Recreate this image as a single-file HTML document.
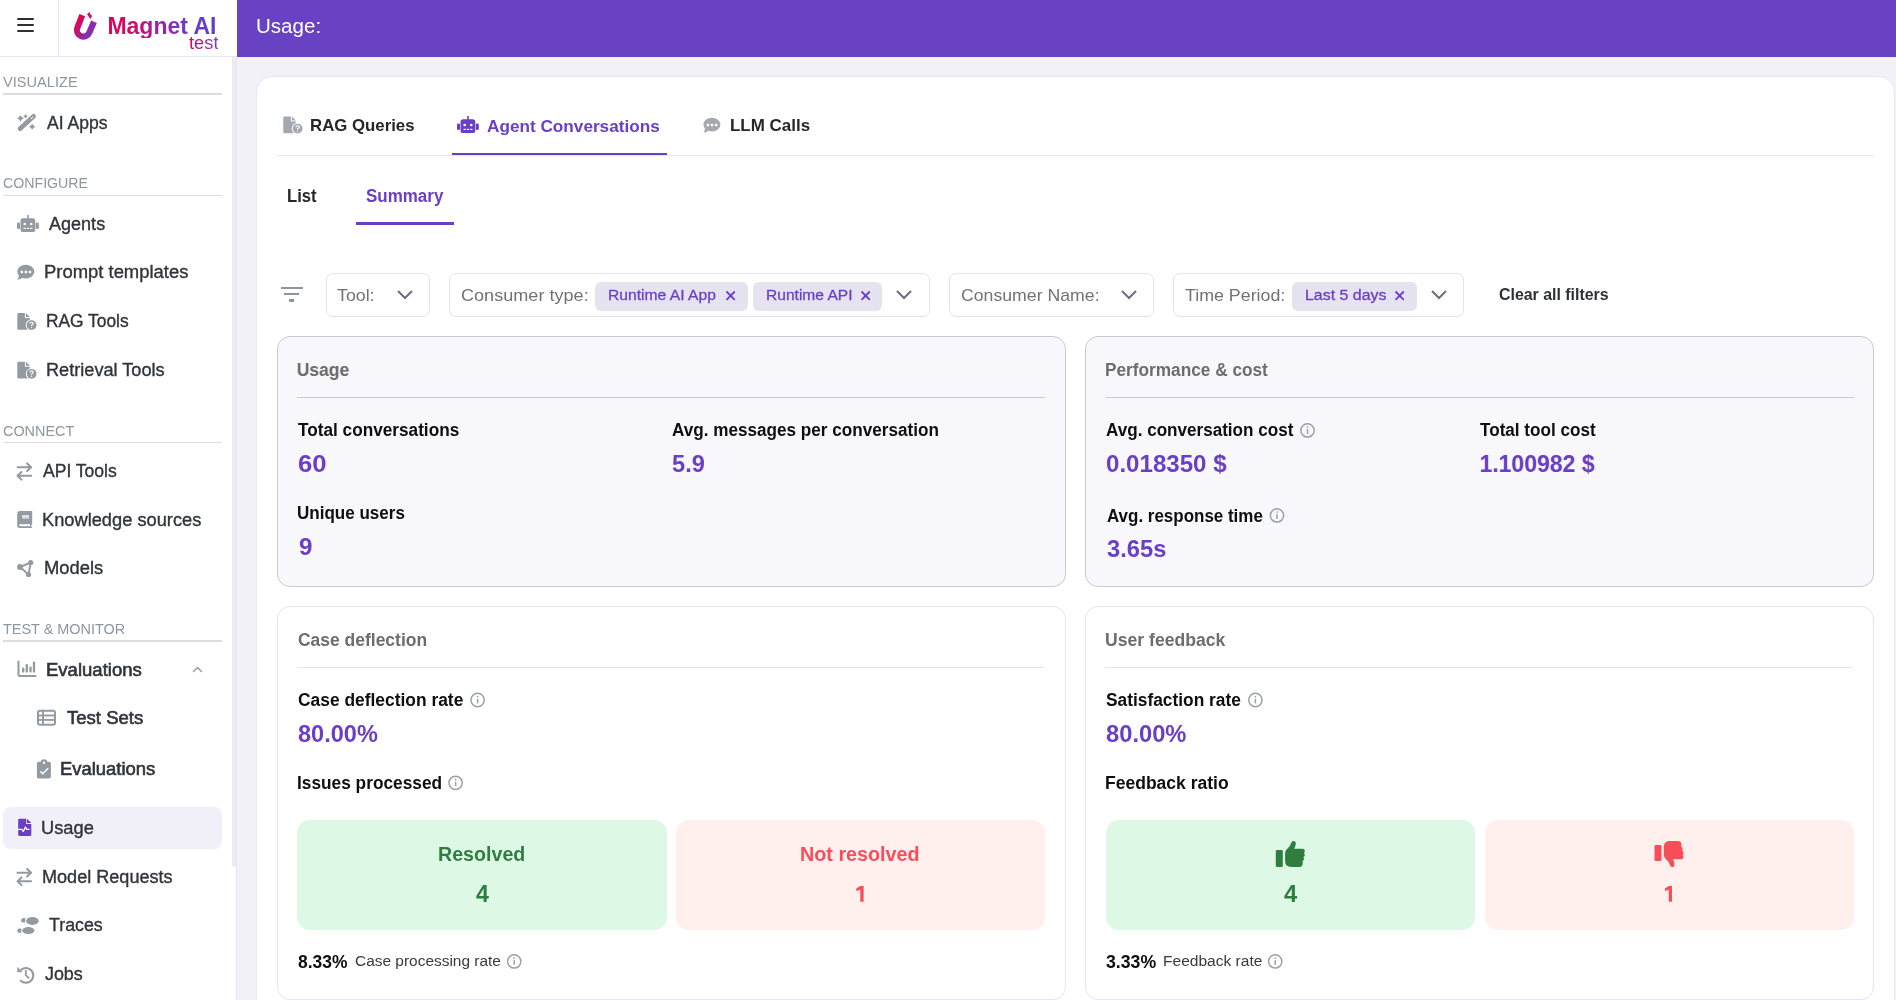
<!DOCTYPE html>
<html><head><meta charset="utf-8">
<style>
*{box-sizing:border-box;margin:0;padding:0}
html,body{width:1896px;height:1000px;overflow:hidden;background:#f3f1f8;font-family:"Liberation Sans",sans-serif}
.t{position:absolute;white-space:nowrap}
.r{position:absolute;display:block}
</style></head><body>
<div class="r" style="left:0px;top:0px;width:237px;height:1000px;background:#fff;"></div>
<div class="r" style="left:237px;top:0px;width:1659px;height:57px;background:#6941c3;"></div>
<div class="r" style="left:0px;top:56px;width:237px;height:1px;background:#e7e4f4;"></div>
<div class="r" style="left:58px;top:0px;width:1px;height:56px;background:#e7e4f4;"></div>
<div class="r" style="left:236px;top:57px;width:1px;height:943px;background:#e8e6f4;"></div>
<div class="r" style="left:232px;top:57px;width:4.2px;height:810px;background:#ececec;border-radius:0 0 2px 2px"></div>
<div class="r" style="left:17px;top:18px;width:17px;height:2px;background:#303030;border-radius:1px"></div>
<div class="r" style="left:17px;top:24px;width:17px;height:2px;background:#303030;border-radius:1px"></div>
<div class="r" style="left:17px;top:30px;width:17px;height:2px;background:#303030;border-radius:1px"></div>
<svg class="r" style="left:68px;top:8px" width="36" height="36" viewBox="68 8 36 36">
<defs><linearGradient id="lg1" gradientUnits="userSpaceOnUse" x1="75" y1="20" x2="95" y2="34"><stop offset="0" stop-color="#ea0045"/><stop offset="0.5" stop-color="#b01c8c"/><stop offset="1" stop-color="#6240d2"/></linearGradient></defs>
<path d="M82.3 15.2 L77.3 27.8 A6.4 6.4 0 0 0 89.4 32.4 L94 21.8" stroke="url(#lg1)" stroke-width="6.2" fill="none"/>
<path d="M87 14.3 L89.6 11.9 L90.6 14.4 L92.2 15.9 L90.2 18.9 L88.6 16.4 Z" fill="#c2137c"/>
</svg>
<div class="t" style="left:107.40px;top:15px;font-size:23px;line-height:23px;font-weight:700;color:transparent;background:linear-gradient(90deg,#e6004b 0%,#c40f7c 30%,#8a2bb5 58%,#6a3cc9 75%,#5f40cc 100%);-webkit-background-clip:text;background-clip:text">Magnet AI</div>
<div class="t" style="left:188.50px;top:34px;font-size:18px;line-height:18px;font-weight:400;color:transparent;transform:scaleX(1.0168);transform-origin:0 0;background:linear-gradient(90deg,#e0004e 0%,#a8209a 50%,#6a45d0 100%);-webkit-background-clip:text;background-clip:text">test</div>
<div class="t" style="left:256.47px;top:16px;font-size:20px;line-height:20px;font-weight:400;color:#fff;transform:scaleX(1.0277);transform-origin:0 0">Usage:</div>
<div class="t" style="left:3.30px;top:74px;font-size:15.5px;line-height:15.5px;font-weight:400;color:#8d979f;transform:scaleX(0.9416);transform-origin:0 0">VISUALIZE</div>
<div class="r" style="left:3px;top:93px;width:219px;height:2px;background:#dcdcdc;"></div>
<div class="t" style="left:3.30px;top:175px;font-size:15.5px;line-height:15.5px;font-weight:400;color:#8d979f;transform:scaleX(0.9141);transform-origin:0 0">CONFIGURE</div>
<div class="r" style="left:3px;top:195px;width:219px;height:1px;background:#dedede;"></div>
<div class="t" style="left:3.30px;top:423px;font-size:15.5px;line-height:15.5px;font-weight:400;color:#8d979f;transform:scaleX(0.9291);transform-origin:0 0">CONNECT</div>
<div class="r" style="left:3px;top:442px;width:219px;height:1px;background:#dedede;"></div>
<div class="t" style="left:3.30px;top:621px;font-size:15.5px;line-height:15.5px;font-weight:400;color:#8d979f;transform:scaleX(0.9316);transform-origin:0 0">TEST &amp; MONITOR</div>
<div class="r" style="left:3px;top:640px;width:219px;height:2px;background:#dcdcdc;"></div>
<div class="t" style="left:47.20px;top:115px;font-size:17.5px;line-height:17.5px;font-weight:400;color:#2f353b;transform:scaleX(1.0011);transform-origin:0 0;-webkit-text-stroke:0.35px #2f353b">AI Apps</div>
<div class="t" style="left:49.20px;top:216px;font-size:17.5px;line-height:17.5px;font-weight:400;color:#2f353b;transform:scaleX(1.0305);transform-origin:0 0;-webkit-text-stroke:0.35px #2f353b">Agents</div>
<div class="t" style="left:43.95px;top:264px;font-size:17.5px;line-height:17.5px;font-weight:400;color:#2f353b;transform:scaleX(1.0529);transform-origin:0 0;-webkit-text-stroke:0.35px #2f353b">Prompt templates</div>
<div class="t" style="left:45.81px;top:313px;font-size:17.5px;line-height:17.5px;font-weight:400;color:#2f353b;transform:scaleX(0.9917);transform-origin:0 0;-webkit-text-stroke:0.35px #2f353b">RAG Tools</div>
<div class="t" style="left:45.76px;top:362px;font-size:17.5px;line-height:17.5px;font-weight:400;color:#2f353b;transform:scaleX(1.0367);transform-origin:0 0;-webkit-text-stroke:0.35px #2f353b">Retrieval Tools</div>
<div class="t" style="left:42.70px;top:463px;font-size:17.5px;line-height:17.5px;font-weight:400;color:#2f353b;transform:scaleX(1.0017);transform-origin:0 0;-webkit-text-stroke:0.35px #2f353b">API Tools</div>
<div class="t" style="left:41.96px;top:512px;font-size:17.5px;line-height:17.5px;font-weight:400;color:#2f353b;transform:scaleX(1.0429);transform-origin:0 0;-webkit-text-stroke:0.35px #2f353b">Knowledge sources</div>
<div class="t" style="left:43.95px;top:560px;font-size:17.5px;line-height:17.5px;font-weight:400;color:#2f353b;transform:scaleX(1.0510);transform-origin:0 0;-webkit-text-stroke:0.35px #2f353b">Models</div>
<div class="t" style="left:45.94px;top:662px;font-size:17.5px;line-height:17.5px;font-weight:400;color:#2f353b;transform:scaleX(1.0588);transform-origin:0 0;-webkit-text-stroke:0.6px #2f353b">Evaluations</div>
<div class="t" style="left:66.50px;top:710px;font-size:17.5px;line-height:17.5px;font-weight:400;color:#2f353b;transform:scaleX(1.0592);transform-origin:0 0;-webkit-text-stroke:0.6px #2f353b">Test Sets</div>
<div class="t" style="left:60.45px;top:761px;font-size:17.5px;line-height:17.5px;font-weight:400;color:#2f353b;transform:scaleX(1.0532);transform-origin:0 0;-webkit-text-stroke:0.6px #2f353b">Evaluations</div>
<div class="r" style="left:3px;top:807px;width:219px;height:42px;background:#f1eff8;border-radius:8px"></div>
<div class="t" style="left:41.46px;top:820px;font-size:17.5px;line-height:17.5px;font-weight:400;color:#2f353b;transform:scaleX(1.0439);transform-origin:0 0;-webkit-text-stroke:0.35px #2f353b">Usage</div>
<div class="t" style="left:41.67px;top:869px;font-size:17.5px;line-height:17.5px;font-weight:400;color:#2f353b;transform:scaleX(1.0326);transform-origin:0 0;-webkit-text-stroke:0.35px #2f353b">Model Requests</div>
<div class="t" style="left:49.00px;top:917px;font-size:17.5px;line-height:17.5px;font-weight:400;color:#2f353b;transform:scaleX(1.0173);transform-origin:0 0;-webkit-text-stroke:0.35px #2f353b">Traces</div>
<div class="t" style="left:45.00px;top:966px;font-size:17.5px;line-height:17.5px;font-weight:400;color:#2f353b;transform:scaleX(1.0211);transform-origin:0 0;-webkit-text-stroke:0.35px #2f353b">Jobs</div>
<svg class="r" style="left:14px;top:110px" width="26" height="24" viewBox="14 110 26 24"><line x1="20" y1="128.8" x2="33.6" y2="116.2" stroke="#939aa1" stroke-width="4.6" stroke-linecap="round"/><line x1="30.6" y1="119" x2="33.2" y2="116.6" stroke="#fff" stroke-width="1.1" opacity="0.7"/><path d="M20.5 114.89999999999999 Q21.452 117.348 23.9 118.3 Q21.452 119.252 20.5 121.7 Q19.548 119.252 17.1 118.3 Q19.548 117.348 20.5 114.89999999999999 Z" fill="#939aa1"/><path d="M25.5 113.9 Q26.144 115.556 27.8 116.2 Q26.144 116.84400000000001 25.5 118.5 Q24.856 116.84400000000001 23.2 116.2 Q24.856 115.556 25.5 113.9 Z" fill="#939aa1"/><path d="M32.2 123.60000000000001 Q33.068000000000005 125.83200000000001 35.300000000000004 126.7 Q33.068000000000005 127.568 32.2 129.8 Q31.332000000000004 127.568 29.1 126.7 Q31.332000000000004 125.83200000000001 32.2 123.60000000000001 Z" fill="#939aa1"/></svg>
<svg class="r" style="left:14px;top:212px" width="28" height="24" viewBox="14 212 28 24"><g transform="translate(17 215) scale(1.0)"><rect x="3.5" y="3.2" width="14.8" height="13.8" rx="2.6" fill="#939aa1"/><rect x="10.2" y="0" width="1.6" height="4" fill="#939aa1"/><rect x="0" y="7.5" width="3" height="6.5" rx="1.2" fill="#939aa1"/><rect x="18.8" y="7.5" width="3" height="6.5" rx="1.2" fill="#939aa1"/><circle cx="7.7" cy="9" r="1.3" fill="#fff"/><circle cx="14.3" cy="9" r="1.3" fill="#fff"/><rect x="6.6" y="12.8" width="2.2" height="1.2" fill="#fff"/><rect x="9.9" y="12.8" width="2.2" height="1.2" fill="#fff"/><rect x="13.2" y="12.8" width="2.2" height="1.2" fill="#fff"/></g></svg>
<svg class="r" style="left:14px;top:262px" width="24" height="22" viewBox="14 262 24 22"><g transform="translate(17 265)"><ellipse cx="8.8" cy="6.6" rx="8.5" ry="6.8" fill="#939aa1"/><path d="M1.8 10 Q2 13 0.2 14.8 Q4 14.6 5.6 12.6 Z" fill="#939aa1"/><rect x="3.6" y="5.8" width="2.4" height="2.4" fill="#fff"/><rect x="7.7" y="5.8" width="2.4" height="2.4" fill="#fff"/><rect x="11.8" y="5.8" width="2.4" height="2.4" fill="#fff"/></g></svg>
<svg class="r" style="left:14px;top:310px" width="26" height="24" viewBox="14 310 26 24"><g transform="translate(17.3 313)"><path d="M1.2 0 H7.6 V5 H12.6 V15.6 Q12.6 16.8 11.4 16.8 H1.2 Q0 16.8 0 15.6 V1.2 Q0 0 1.2 0 Z" fill="#939aa1"/><path d="M8.6 0 L12.6 4 H8.6 Z" fill="#939aa1"/><circle cx="14.3" cy="12.1" r="5.9" fill="#fff"/><circle cx="14.3" cy="12.1" r="4.9" fill="#939aa1"/><path d="M12.6 10.8 Q12.6 9.2 14.3 9.2 Q16 9.2 16 10.6 Q16 11.6 14.3 12.2 V13" stroke="#fff" stroke-width="1.1" fill="none"/><circle cx="14.3" cy="14.6" r="0.7" fill="#fff"/></g></svg>
<svg class="r" style="left:14px;top:359px" width="26" height="24" viewBox="14 359 26 24"><g transform="translate(17.3 361.7)"><path d="M1.2 0 H7.6 V5 H12.6 V15.6 Q12.6 16.8 11.4 16.8 H1.2 Q0 16.8 0 15.6 V1.2 Q0 0 1.2 0 Z" fill="#939aa1"/><path d="M8.6 0 L12.6 4 H8.6 Z" fill="#939aa1"/><circle cx="14.3" cy="12.1" r="5.9" fill="#fff"/><circle cx="14.3" cy="12.1" r="4.9" fill="#939aa1"/><path d="M12.6 10.8 Q12.6 9.2 14.3 9.2 Q16 9.2 16 10.6 Q16 11.6 14.3 12.2 V13" stroke="#fff" stroke-width="1.1" fill="none"/><circle cx="14.3" cy="14.6" r="0.7" fill="#fff"/></g></svg>
<svg class="r" style="left:14px;top:460px" width="22" height="22" viewBox="14 460 22 22"><g transform="translate(16.5 463)" stroke="#939aa1" stroke-width="2" fill="none" stroke-linecap="round" stroke-linejoin="round"><path d="M1 4.2 H14.6 M10.6 0.4 L14.6 4.2 L10.6 8"/><path d="M14.6 12.8 H1 M5 9 L1 12.8 L5 16.6"/></g></svg>
<svg class="r" style="left:14px;top:865px" width="22" height="22" viewBox="14 865 22 22"><g transform="translate(16.5 868.5)" stroke="#939aa1" stroke-width="2" fill="none" stroke-linecap="round" stroke-linejoin="round"><path d="M1 4.2 H14.6 M10.6 0.4 L14.6 4.2 L10.6 8"/><path d="M14.6 12.8 H1 M5 9 L1 12.8 L5 16.6"/></g></svg>
<svg class="r" style="left:14px;top:508px" width="22" height="24" viewBox="14 508 22 24"><g transform="translate(17.2 511)"><path d="M2.5 0 H15 V13.2 Q14 13.6 14 15 Q14 16.4 15 16.6 V17 H2.5 Q0 17 0 14.5 V2.5 Q0 0 2.5 0 Z" fill="#939aa1"/><rect x="2.2" y="13.2" width="10.6" height="2" fill="#fff"/><rect x="4.8" y="4" width="7" height="3.6" fill="#dde0e2"/></g></svg>
<svg class="r" style="left:14px;top:556px" width="24" height="24" viewBox="14 556 24 24"><g stroke="#939aa1" stroke-width="1.9" fill="none"><path d="M20 567 L30.7 562.5 L28.5 574.5 Z"/></g><circle cx="20" cy="567" r="2.9" fill="#939aa1"/><circle cx="30.7" cy="562.5" r="2.6" fill="#939aa1"/><circle cx="28.5" cy="574.5" r="2.6" fill="#939aa1"/></svg>
<svg class="r" style="left:14px;top:658px" width="26" height="22" viewBox="14 658 26 22"><path d="M18.5 661.5 V674.5 Q18.5 676 20 676 H35.5" stroke="#939aa1" stroke-width="2" fill="none" stroke-linecap="round"/><g stroke="#939aa1" stroke-width="2.3" stroke-linecap="round"><line x1="23.2" y1="668.6" x2="23.2" y2="671.6"/><line x1="26.8" y1="665.2" x2="26.8" y2="671.6"/><line x1="30.5" y1="667.6" x2="30.5" y2="671.6"/><line x1="34" y1="662.6" x2="34" y2="671.6"/></g></svg>
<svg class="r" style="left:190px;top:662px" width="16" height="14" viewBox="190 662 16 14"><path d="M193.5 671.5 L197.5 667.5 L201.5 671.5" stroke="#9aa0a6" stroke-width="1.6" fill="none" stroke-linecap="round" stroke-linejoin="round"/></svg>
<svg class="r" style="left:34px;top:706px" width="26" height="24" viewBox="34 706 26 24"><rect x="38" y="710.7" width="17" height="14" rx="2" stroke="#939aa1" stroke-width="2" fill="none"/><g stroke="#939aa1" stroke-width="1.9"><line x1="43" y1="711" x2="43" y2="724.7"/><line x1="38" y1="715.5" x2="55" y2="715.5"/><line x1="38" y1="719.9" x2="55" y2="719.9"/></g></svg>
<svg class="r" style="left:34px;top:756px" width="22" height="26" viewBox="34 756 22 26"><rect x="36.9" y="761.8" width="14" height="16.6" rx="2" fill="#939aa1"/><circle cx="44" cy="762.6" r="3.4" fill="#939aa1"/><circle cx="44" cy="762.8" r="1.2" fill="#fff"/><path d="M40.3 771.3 L42.7 773.8 L48.2 768.3" stroke="#fff" stroke-width="1.5" fill="none"/></svg>
<svg class="r" style="left:15px;top:816px" width="20" height="24" viewBox="15 816 20 24"><path d="M19.4 818.8 H26.2 V824 H31.3 V834.6 Q31.3 836.1 29.8 836.1 H19.7 Q18.2 836.1 18.2 834.6 V820 Q18.2 818.8 19.4 818.8 Z" fill="#6a3fc4"/><path d="M27 818.8 L31.3 823.1 H27 Z" fill="#6a3fc4"/><path d="M18 829.3 H21.8 L23.3 831.5 L25.4 827.1 L26.7 829.3 H29.5" stroke="#fff" stroke-width="1.3" fill="none" stroke-linejoin="round"/></svg>
<svg class="r" style="left:14px;top:914px" width="28" height="24" viewBox="14 914 28 24"><path d="M25.2 918 H23.4 A2.3 2.25 0 0 0 23.4 922.5 H25.2 Z" fill="#939aa1"/><ellipse cx="32.4" cy="921" rx="6.3" ry="3.9" fill="#939aa1"/><path d="M21.3 928.6 H19.5 A2.3 2.1 0 0 0 19.5 932.8 H21.3 Z" fill="#939aa1"/><ellipse cx="28.3" cy="930.6" rx="6.2" ry="3.5" fill="#939aa1"/></svg>
<svg class="r" style="left:14px;top:963px" width="24" height="24" viewBox="14 963 24 24"><path d="M21.3 969.6 A7.4 7.4 0 1 1 20.8 980.8" stroke="#939aa1" stroke-width="2.1" fill="none" stroke-linecap="round"/><path d="M17.3 966.8 L17.3 972.2 L22.6 972.2 Z" fill="#939aa1"/><path d="M25.8 970.6 V975.1 L28.6 977.9" stroke="#939aa1" stroke-width="1.8" fill="none" stroke-linecap="round"/></svg>
<div class="r" style="left:256px;top:76px;width:1639px;height:1000px;background:#fff;border:1px solid #e8e6f4;border-radius:16px;box-sizing:border-box"></div>
<div class="r" style="left:277px;top:155px;width:1597px;height:1px;background:#e8e6f3;"></div>
<svg class="r" style="left:280px;top:115px" width="26" height="22" viewBox="280 115 26 22"><g transform="translate(283.3 116.5)"><path d="M1.2 0 H7.6 V5 H12.6 V15.6 Q12.6 16.8 11.4 16.8 H1.2 Q0 16.8 0 15.6 V1.2 Q0 0 1.2 0 Z" fill="#a3a9ae"/><path d="M8.6 0 L12.6 4 H8.6 Z" fill="#a3a9ae"/><circle cx="14.3" cy="12.1" r="5.9" fill="#fff"/><circle cx="14.3" cy="12.1" r="4.9" fill="#a3a9ae"/><path d="M12.6 10.8 Q12.6 9.2 14.3 9.2 Q16 9.2 16 10.6 Q16 11.6 14.3 12.2 V13" stroke="#fff" stroke-width="1.1" fill="none"/><circle cx="14.3" cy="14.6" r="0.7" fill="#fff"/></g></svg>
<div class="t" style="left:310.31px;top:117px;font-size:17px;line-height:17px;font-weight:700;color:#262626;transform:scaleX(0.9880);transform-origin:0 0">RAG Queries</div>
<svg class="r" style="left:454px;top:115px" width="28" height="22" viewBox="454 115 28 22"><g transform="translate(457 116) scale(1.0)"><rect x="3.5" y="3.2" width="14.8" height="13.8" rx="2.6" fill="#6a3fc6"/><rect x="10.2" y="0" width="1.6" height="4" fill="#6a3fc6"/><rect x="0" y="7.5" width="3" height="6.5" rx="1.2" fill="#6a3fc6"/><rect x="18.8" y="7.5" width="3" height="6.5" rx="1.2" fill="#6a3fc6"/><circle cx="7.7" cy="9" r="1.3" fill="#fff"/><circle cx="14.3" cy="9" r="1.3" fill="#fff"/><rect x="6.6" y="12.8" width="2.2" height="1.2" fill="#fff"/><rect x="9.9" y="12.8" width="2.2" height="1.2" fill="#fff"/><rect x="13.2" y="12.8" width="2.2" height="1.2" fill="#fff"/></g></svg>
<div class="t" style="left:486.60px;top:118px;font-size:17px;line-height:17px;font-weight:700;color:#6a3fc6;transform:scaleX(1.0105);transform-origin:0 0">Agent Conversations</div>
<div class="r" style="left:452px;top:153px;width:215px;height:2px;background:#6a3fc6;"></div>
<svg class="r" style="left:700px;top:114px" width="24" height="22" viewBox="700 114 24 22"><g transform="translate(703.1 118)"><ellipse cx="8.8" cy="6.6" rx="8.5" ry="6.8" fill="#a3a9ae"/><path d="M1.8 10 Q2 13 0.2 14.8 Q4 14.6 5.6 12.6 Z" fill="#a3a9ae"/><rect x="3.6" y="5.8" width="2.4" height="2.4" fill="#fff"/><rect x="7.7" y="5.8" width="2.4" height="2.4" fill="#fff"/><rect x="11.8" y="5.8" width="2.4" height="2.4" fill="#fff"/></g></svg>
<div class="t" style="left:730.00px;top:117px;font-size:17px;line-height:17px;font-weight:700;color:#262626;transform:scaleX(0.9971);transform-origin:0 0">LLM Calls</div>
<div class="t" style="left:286.75px;top:188px;font-size:17.5px;line-height:17.5px;font-weight:700;color:#262626;transform:scaleX(0.9510);transform-origin:0 0">List</div>
<div class="t" style="left:365.90px;top:188px;font-size:17.5px;line-height:17.5px;font-weight:700;color:#6a3fc6;transform:scaleX(0.9697);transform-origin:0 0">Summary</div>
<div class="r" style="left:356px;top:222px;width:98px;height:3px;background:#6a3fc6;"></div>
<div class="r" style="left:280.5px;top:287.2px;width:22.2px;height:2.3px;background:#8e969d;"></div>
<div class="r" style="left:284.2px;top:293.2px;width:14.6px;height:2.3px;background:#8e969d;"></div>
<div class="r" style="left:289px;top:299.4px;width:5px;height:2.4px;background:#8e969d;"></div>
<div class="r" style="left:326px;top:273px;width:104px;height:44px;background:#fff;border:1px solid #e4e1f1;border-radius:7px;box-sizing:border-box"></div>
<div class="t" style="left:337.20px;top:287px;font-size:17px;line-height:17px;font-weight:400;color:#727272;transform:scaleX(1.0459);transform-origin:0 0">Tool:</div>
<svg class="r" style="left:395.5px;top:288px" width="18" height="14" viewBox="395.5 288 18 14"><path d="M397.5 291 L404.5 298 L411.5 291" stroke="#6b6f7e" stroke-width="2" fill="none"/></svg>
<div class="r" style="left:449px;top:273px;width:481px;height:44px;background:#fff;border:1px solid #e4e1f1;border-radius:7px;box-sizing:border-box"></div>
<div class="t" style="left:460.60px;top:287px;font-size:17px;line-height:17px;font-weight:400;color:#727272;transform:scaleX(1.0639);transform-origin:0 0">Consumer type:</div>
<div class="r" style="left:595px;top:282px;width:153px;height:29px;background:#e6e3f1;border-radius:6px"></div>
<div class="t" style="left:608.39px;top:287px;font-size:15.5px;line-height:15.5px;font-weight:400;color:#6a3fc6;transform:scaleX(1.0100);transform-origin:0 0;-webkit-text-stroke:0.3px #6a3fc6">Runtime AI App</div>
<svg class="r" style="left:725px;top:290px" width="12" height="12" viewBox="725 290 12 12"><path d="M726.5 291.5 L734.8 299.8 M734.8 291.5 L726.5 299.8" stroke="#6a3fc6" stroke-width="1.8" /></svg>
<div class="r" style="left:753px;top:282px;width:129px;height:29px;background:#e6e3f1;border-radius:6px"></div>
<div class="t" style="left:765.80px;top:287px;font-size:15.5px;line-height:15.5px;font-weight:400;color:#6a3fc6;transform:scaleX(1.0047);transform-origin:0 0;-webkit-text-stroke:0.3px #6a3fc6">Runtime API</div>
<svg class="r" style="left:859.5px;top:290px" width="12" height="12" viewBox="859.5 290 12 12"><path d="M861.0 291.5 L869.3 299.8 M869.3 291.5 L861.0 299.8" stroke="#6a3fc6" stroke-width="1.8" /></svg>
<svg class="r" style="left:895px;top:288.2px" width="18" height="14" viewBox="895 288.2 18 14"><path d="M897 291.2 L904 298.2 L911 291.2" stroke="#6b6f7e" stroke-width="2" fill="none"/></svg>
<div class="r" style="left:949px;top:273px;width:205px;height:44px;background:#fff;border:1px solid #e4e1f1;border-radius:7px;box-sizing:border-box"></div>
<div class="t" style="left:960.60px;top:287px;font-size:17px;line-height:17px;font-weight:400;color:#727272;transform:scaleX(1.0401);transform-origin:0 0">Consumer Name:</div>
<svg class="r" style="left:1119.8px;top:288.2px" width="18" height="14" viewBox="1119.8 288.2 18 14"><path d="M1121.8 291.2 L1128.8 298.2 L1135.8 291.2" stroke="#6b6f7e" stroke-width="2" fill="none"/></svg>
<div class="r" style="left:1173px;top:273px;width:291px;height:44px;background:#fff;border:1px solid #e4e1f1;border-radius:7px;box-sizing:border-box"></div>
<div class="t" style="left:1185.00px;top:287px;font-size:17px;line-height:17px;font-weight:400;color:#727272;transform:scaleX(1.0473);transform-origin:0 0">Time Period:</div>
<div class="r" style="left:1292px;top:282px;width:125px;height:29px;background:#e6e3f1;border-radius:6px"></div>
<div class="t" style="left:1304.77px;top:287px;font-size:15.5px;line-height:15.5px;font-weight:400;color:#6a3fc6;transform:scaleX(1.0278);transform-origin:0 0;-webkit-text-stroke:0.3px #6a3fc6">Last 5 days</div>
<svg class="r" style="left:1394.2px;top:290px" width="12" height="12" viewBox="1394.2 290 12 12"><path d="M1395.7 291.5 L1404.0 299.8 M1404.0 291.5 L1395.7 299.8" stroke="#6a3fc6" stroke-width="1.8" /></svg>
<svg class="r" style="left:1429.8px;top:288.2px" width="18" height="14" viewBox="1429.8 288.2 18 14"><path d="M1431.8 291.2 L1438.8 298.2 L1445.8 291.2" stroke="#6b6f7e" stroke-width="2" fill="none"/></svg>
<div class="t" style="left:1498.90px;top:286px;font-size:16.5px;line-height:16.5px;font-weight:700;color:#2d3136;transform:scaleX(0.9635);transform-origin:0 0">Clear all filters</div>
<div class="r" style="left:277px;top:336px;width:789px;height:251px;background:#f8f7fb;border:1px solid #c9c9d2;border-radius:13px;box-sizing:border-box"></div>
<div class="r" style="left:297px;top:397px;width:748px;height:1.3px;background:#c9c9d2;"></div>
<div class="t" style="left:296.70px;top:362px;font-size:17.5px;line-height:17.5px;font-weight:700;color:#6d6d6d">Usage</div>
<div class="t" style="left:297.80px;top:422px;font-size:17.5px;line-height:17.5px;font-weight:700;color:#0e0e0e;transform:scaleX(0.9830);transform-origin:0 0">Total conversations</div>
<div class="t" style="left:297.80px;top:453px;font-size:23px;line-height:23px;font-weight:700;color:#6a3fc6;transform:scaleX(1.1173);transform-origin:0 0">60</div>
<div class="t" style="left:672.30px;top:422px;font-size:17.5px;line-height:17.5px;font-weight:700;color:#0e0e0e;transform:scaleX(0.9788);transform-origin:0 0">Avg. messages per conversation</div>
<div class="t" style="left:672.30px;top:453px;font-size:23px;line-height:23px;font-weight:700;color:#6a3fc6;transform:scaleX(1.0262);transform-origin:0 0">5.9</div>
<div class="t" style="left:297.43px;top:505px;font-size:17.5px;line-height:17.5px;font-weight:700;color:#0e0e0e;transform:scaleX(0.9734);transform-origin:0 0">Unique users</div>
<div class="t" style="left:298.50px;top:536px;font-size:23px;line-height:23px;font-weight:700;color:#6a3fc6;transform:scaleX(1.0500);transform-origin:0 0">9</div>
<div class="r" style="left:1085px;top:336px;width:789px;height:251px;background:#f8f7fb;border:1px solid #c9c9d2;border-radius:13px;box-sizing:border-box"></div>
<div class="r" style="left:1106px;top:397px;width:748px;height:1.3px;background:#c9c9d2;"></div>
<div class="t" style="left:1105.22px;top:362px;font-size:17.5px;line-height:17.5px;font-weight:700;color:#6d6d6d;transform:scaleX(0.9848);transform-origin:0 0">Performance &amp; cost</div>
<div class="t" style="left:1106.20px;top:422px;font-size:17.5px;line-height:17.5px;font-weight:700;color:#0e0e0e;transform:scaleX(0.9762);transform-origin:0 0">Avg. conversation cost</div>
<svg class="r" style="left:1298px;top:421px" width="19" height="19" viewBox="1298 421 19 19"><circle cx="1307.5" cy="430.4" r="6.65" stroke="#9aa1a7" stroke-width="1.5" fill="none"/><rect x="1306.75" y="429.2" width="1.5" height="4.6" fill="#9aa1a7"/><circle cx="1307.5" cy="427.09999999999997" r="0.9" fill="#9aa1a7"/></svg>
<div class="t" style="left:1106.20px;top:453px;font-size:23px;line-height:23px;font-weight:700;color:#6a3fc6;transform:scaleX(1.0475);transform-origin:0 0">0.018350 $</div>
<div class="t" style="left:1480.40px;top:422px;font-size:17.5px;line-height:17.5px;font-weight:700;color:#0e0e0e;transform:scaleX(0.9776);transform-origin:0 0">Total tool cost</div>
<div class="t" style="left:1479.40px;top:453px;font-size:23px;line-height:23px;font-weight:700;color:#6a3fc6">1.100982 $</div>
<div class="t" style="left:1106.60px;top:508px;font-size:17.5px;line-height:17.5px;font-weight:700;color:#0e0e0e;transform:scaleX(0.9692);transform-origin:0 0">Avg. response time</div>
<svg class="r" style="left:1267px;top:506px" width="19" height="19" viewBox="1267 506 19 19"><circle cx="1277" cy="515.4" r="6.65" stroke="#9aa1a7" stroke-width="1.5" fill="none"/><rect x="1276.25" y="514.1999999999999" width="1.5" height="4.6" fill="#9aa1a7"/><circle cx="1277" cy="512.1" r="0.9" fill="#9aa1a7"/></svg>
<div class="t" style="left:1106.60px;top:538px;font-size:23px;line-height:23px;font-weight:700;color:#6a3fc6;transform:scaleX(1.0306);transform-origin:0 0">3.65s</div>
<div class="r" style="left:277px;top:606px;width:789px;height:394px;background:#fff;border:1px solid #e6e4f0;border-radius:13px;box-sizing:border-box"></div>
<div class="r" style="left:297px;top:667px;width:748px;height:1.2px;background:#e6e4f0;"></div>
<div class="r" style="left:1085px;top:606px;width:789px;height:394px;background:#fff;border:1px solid #e6e4f0;border-radius:13px;box-sizing:border-box"></div>
<div class="r" style="left:1105px;top:667px;width:748px;height:1.2px;background:#e6e4f0;"></div>
<div class="t" style="left:298.00px;top:632px;font-size:17.5px;line-height:17.5px;font-weight:700;color:#6d6d6d;transform:scaleX(0.9980);transform-origin:0 0">Case deflection</div>
<div class="t" style="left:298.00px;top:692px;font-size:17.5px;line-height:17.5px;font-weight:700;color:#0e0e0e;transform:scaleX(0.9941);transform-origin:0 0">Case deflection rate</div>
<svg class="r" style="left:468px;top:690px" width="19" height="19" viewBox="468 690 19 19"><circle cx="477.6" cy="700" r="6.65" stroke="#9aa1a7" stroke-width="1.5" fill="none"/><rect x="476.85" y="698.8" width="1.5" height="4.6" fill="#9aa1a7"/><circle cx="477.6" cy="696.7" r="0.9" fill="#9aa1a7"/></svg>
<div class="t" style="left:298.00px;top:723px;font-size:23px;line-height:23px;font-weight:700;color:#6a3fc6;transform:scaleX(1.0238);transform-origin:0 0">80.00%</div>
<div class="t" style="left:297.01px;top:775px;font-size:17.5px;line-height:17.5px;font-weight:700;color:#0e0e0e;transform:scaleX(0.9876);transform-origin:0 0">Issues processed</div>
<svg class="r" style="left:446px;top:773px" width="19" height="19" viewBox="446 773 19 19"><circle cx="455.6" cy="782.8" r="6.65" stroke="#9aa1a7" stroke-width="1.5" fill="none"/><rect x="454.85" y="781.5999999999999" width="1.5" height="4.6" fill="#9aa1a7"/><circle cx="455.6" cy="779.5" r="0.9" fill="#9aa1a7"/></svg>
<div class="r" style="left:297px;top:820px;width:370px;height:110px;background:#ddf9e6;border-radius:13px"></div>
<div class="r" style="left:676px;top:820px;width:369px;height:110px;background:#fff0ee;border-radius:13px"></div>
<div class="t" style="left:437.99px;top:845px;font-size:19.5px;line-height:19.5px;font-weight:700;color:#2f7d3f;transform:scaleX(1.0072);transform-origin:0 0">Resolved</div>
<div class="t" style="left:475.60px;top:883px;font-size:23px;line-height:23px;font-weight:700;color:#2f7d3f;transform:scaleX(1.0077);transform-origin:0 0">4</div>
<div class="t" style="left:800.49px;top:845px;font-size:19.5px;line-height:19.5px;font-weight:700;color:#f74e5a;transform:scaleX(1.0129);transform-origin:0 0">Not resolved</div>
<svg class="r" style="left:850px;top:880px" width="20" height="26" viewBox="850 880 20 26"><path d="M856.25 888.4 L860.3 886 H863.6 V901.8 H860.3 V889.7 L856.25 891.1 Z" fill="#f74e5a"/></svg>
<div class="t" style="left:297.70px;top:954px;font-size:17.5px;line-height:17.5px;font-weight:700;color:#0e0e0e;transform:scaleX(0.9968);transform-origin:0 0">8.33%</div>
<div class="t" style="left:354.70px;top:953px;font-size:15.5px;line-height:15.5px;font-weight:400;color:#3a3a3a;transform:scaleX(0.9963);transform-origin:0 0">Case processing rate</div>
<svg class="r" style="left:504px;top:952px" width="19" height="19" viewBox="504 952 19 19"><circle cx="514.2" cy="961.4" r="6.65" stroke="#9aa1a7" stroke-width="1.5" fill="none"/><rect x="513.45" y="960.1999999999999" width="1.5" height="4.6" fill="#9aa1a7"/><circle cx="514.2" cy="958.1" r="0.9" fill="#9aa1a7"/></svg>
<div class="t" style="left:1105.19px;top:632px;font-size:17.5px;line-height:17.5px;font-weight:700;color:#6d6d6d;transform:scaleX(1.0058);transform-origin:0 0">User feedback</div>
<div class="t" style="left:1106.20px;top:692px;font-size:17.5px;line-height:17.5px;font-weight:700;color:#0e0e0e;transform:scaleX(0.9903);transform-origin:0 0">Satisfaction rate</div>
<svg class="r" style="left:1246px;top:690px" width="19" height="19" viewBox="1246 690 19 19"><circle cx="1255.4" cy="700" r="6.65" stroke="#9aa1a7" stroke-width="1.5" fill="none"/><rect x="1254.65" y="698.8" width="1.5" height="4.6" fill="#9aa1a7"/><circle cx="1255.4" cy="696.7" r="0.9" fill="#9aa1a7"/></svg>
<div class="t" style="left:1106.00px;top:723px;font-size:23px;line-height:23px;font-weight:700;color:#6a3fc6;transform:scaleX(1.0315);transform-origin:0 0">80.00%</div>
<div class="t" style="left:1105.00px;top:775px;font-size:17.5px;line-height:17.5px;font-weight:700;color:#0e0e0e;transform:scaleX(1.0014);transform-origin:0 0">Feedback ratio</div>
<div class="r" style="left:1106px;top:820px;width:369px;height:110px;background:#ddf9e6;border-radius:13px"></div>
<div class="r" style="left:1485px;top:820px;width:369px;height:110px;background:#fff0ee;border-radius:13px"></div>
<svg class="r" style="left:1273px;top:838px" width="35" height="32" viewBox="1273 838 35 32"><rect x="1275.8" y="850" width="7" height="17" rx="1.3" fill="#2f7d3f"/><g transform="translate(1275.8 841)"><path d="M9.3 12.5 Q9.3 9.5 11.5 7.8 Q14.6 5.2 15.3 2.2 Q15.8 0 17.6 0 Q20 0 20 2.6 Q20 5.2 18.4 7.8 H26.8 Q29 7.8 29 10 Q29 11.4 28.1 12 Q29 12.8 29 14 Q29 15.6 27.6 16.2 Q28.2 17 28.2 18 Q28.2 19.6 26.6 20.2 Q27 21 27 21.8 Q27 26 23.6 26 H15.5 Q12.6 26 11 24.6 Q9.3 23 9.3 20.5 Z" fill="#2f7d3f"/></g></svg>
<div class="t" style="left:1283.60px;top:883px;font-size:23px;line-height:23px;font-weight:700;color:#2f7d3f;transform:scaleX(1.0308);transform-origin:0 0">4</div>
<svg class="r" style="left:1652px;top:838px" width="35" height="32" viewBox="1652 838 35 32"><rect x="1654.5" y="845" width="7" height="16" rx="1.3" fill="#f74e5a"/><g transform="translate(1654.5 867) scale(1 -1)"><path d="M9.3 12.5 Q9.3 9.5 11.5 7.8 Q14.6 5.2 15.3 2.2 Q15.8 0 17.6 0 Q20 0 20 2.6 Q20 5.2 18.4 7.8 H26.8 Q29 7.8 29 10 Q29 11.4 28.1 12 Q29 12.8 29 14 Q29 15.6 27.6 16.2 Q28.2 17 28.2 18 Q28.2 19.6 26.6 20.2 Q27 21 27 21.8 Q27 26 23.6 26 H15.5 Q12.6 26 11 24.6 Q9.3 23 9.3 20.5 Z" fill="#f74e5a"/></g></svg>
<svg class="r" style="left:1660px;top:880px" width="20" height="26" viewBox="1660 880 20 26"><path d="M1664.9 888.4 L1668.75 886 H1672 V901.8 H1668.75 V889.7 L1664.9 891.1 Z" fill="#f74e5a"/></svg>
<div class="t" style="left:1106.40px;top:954px;font-size:17.5px;line-height:17.5px;font-weight:700;color:#0e0e0e;transform:scaleX(1.0108);transform-origin:0 0">3.33%</div>
<div class="t" style="left:1162.50px;top:953px;font-size:15.5px;line-height:15.5px;font-weight:400;color:#3a3a3a;transform:scaleX(1.0034);transform-origin:0 0">Feedback rate</div>
<svg class="r" style="left:1265px;top:952px" width="19" height="19" viewBox="1265 952 19 19"><circle cx="1275.2" cy="961.4" r="6.65" stroke="#9aa1a7" stroke-width="1.5" fill="none"/><rect x="1274.45" y="960.1999999999999" width="1.5" height="4.6" fill="#9aa1a7"/><circle cx="1275.2" cy="958.1" r="0.9" fill="#9aa1a7"/></svg>
</body></html>
